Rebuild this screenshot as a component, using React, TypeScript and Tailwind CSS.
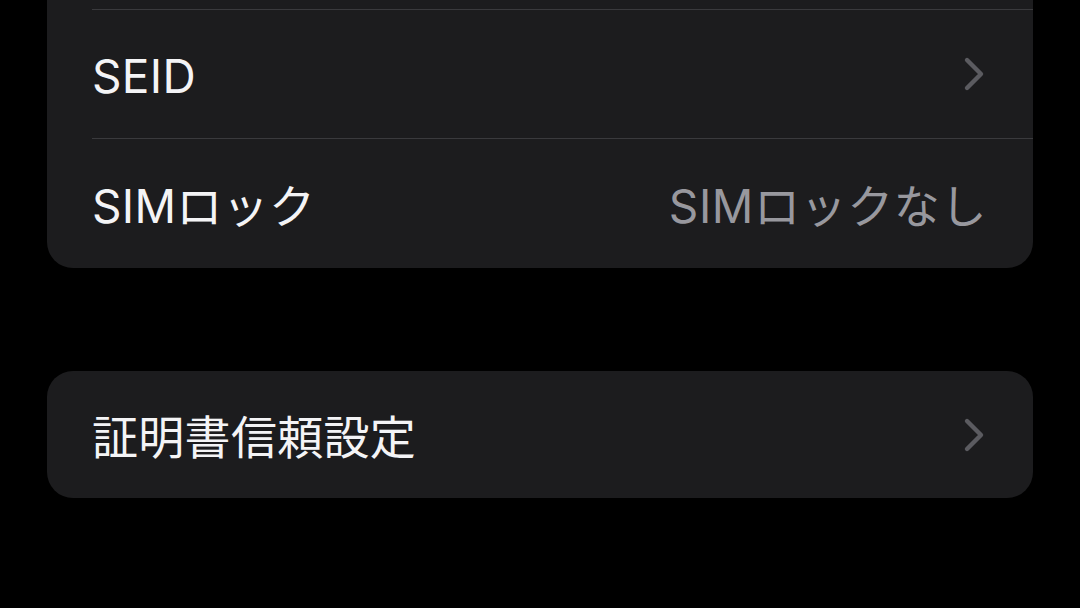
const FONT = { fontFamily: 'Inter, "Noto Sans CJK JP", sans-serif' }

function Chevron() {
  return (
    <svg width="26" height="36" viewBox="0 0 26 36" fill="none" className="shrink-0">
      <path d="M6 4 L20 18 L6 32" stroke="#5b5b60" strokeWidth="4.4" strokeLinecap="round" strokeLinejoin="round" />
    </svg>
  )
}

function Row({ label, value, chevron, divider, h }: { label: string; value?: string; chevron?: boolean; divider?: boolean; h: string }) {
  return (
    <div className={`ml-[45px] flex items-center pr-[46px] ${h} ${divider ? 'border-t-[1.5px] border-[#3a3a3d]' : ''}`}>
      <span className="flex-1 pt-[4px] text-[46px] leading-none tracking-[0.3px] text-[#f4f4f6]">{label}</span>
      {value && <span className="pt-[4px] text-[46px] leading-none tracking-[0.6px] text-[#98989e]">{value}</span>}
      {chevron && <Chevron />}
    </div>
  )
}

export default function App() {
  return (
    <div className="h-[608px] w-[1080px] overflow-hidden bg-black" style={FONT}>
      <div className="mx-[47px] w-[986px] rounded-b-[26px] bg-[#1c1c1e]">
        <div className="h-[9px]" />
        <Row label="SEID" chevron divider h="h-[129px]" />
        <Row label="SIMロック" value="SIMロックなし" divider h="h-[130px]" />
      </div>
      <div className="mx-[47px] mt-[103px] w-[986px] rounded-[26px] bg-[#1c1c1e]">
        <Row label="証明書信頼設定" chevron h="h-[127px]" />
      </div>
    </div>
  )
}
